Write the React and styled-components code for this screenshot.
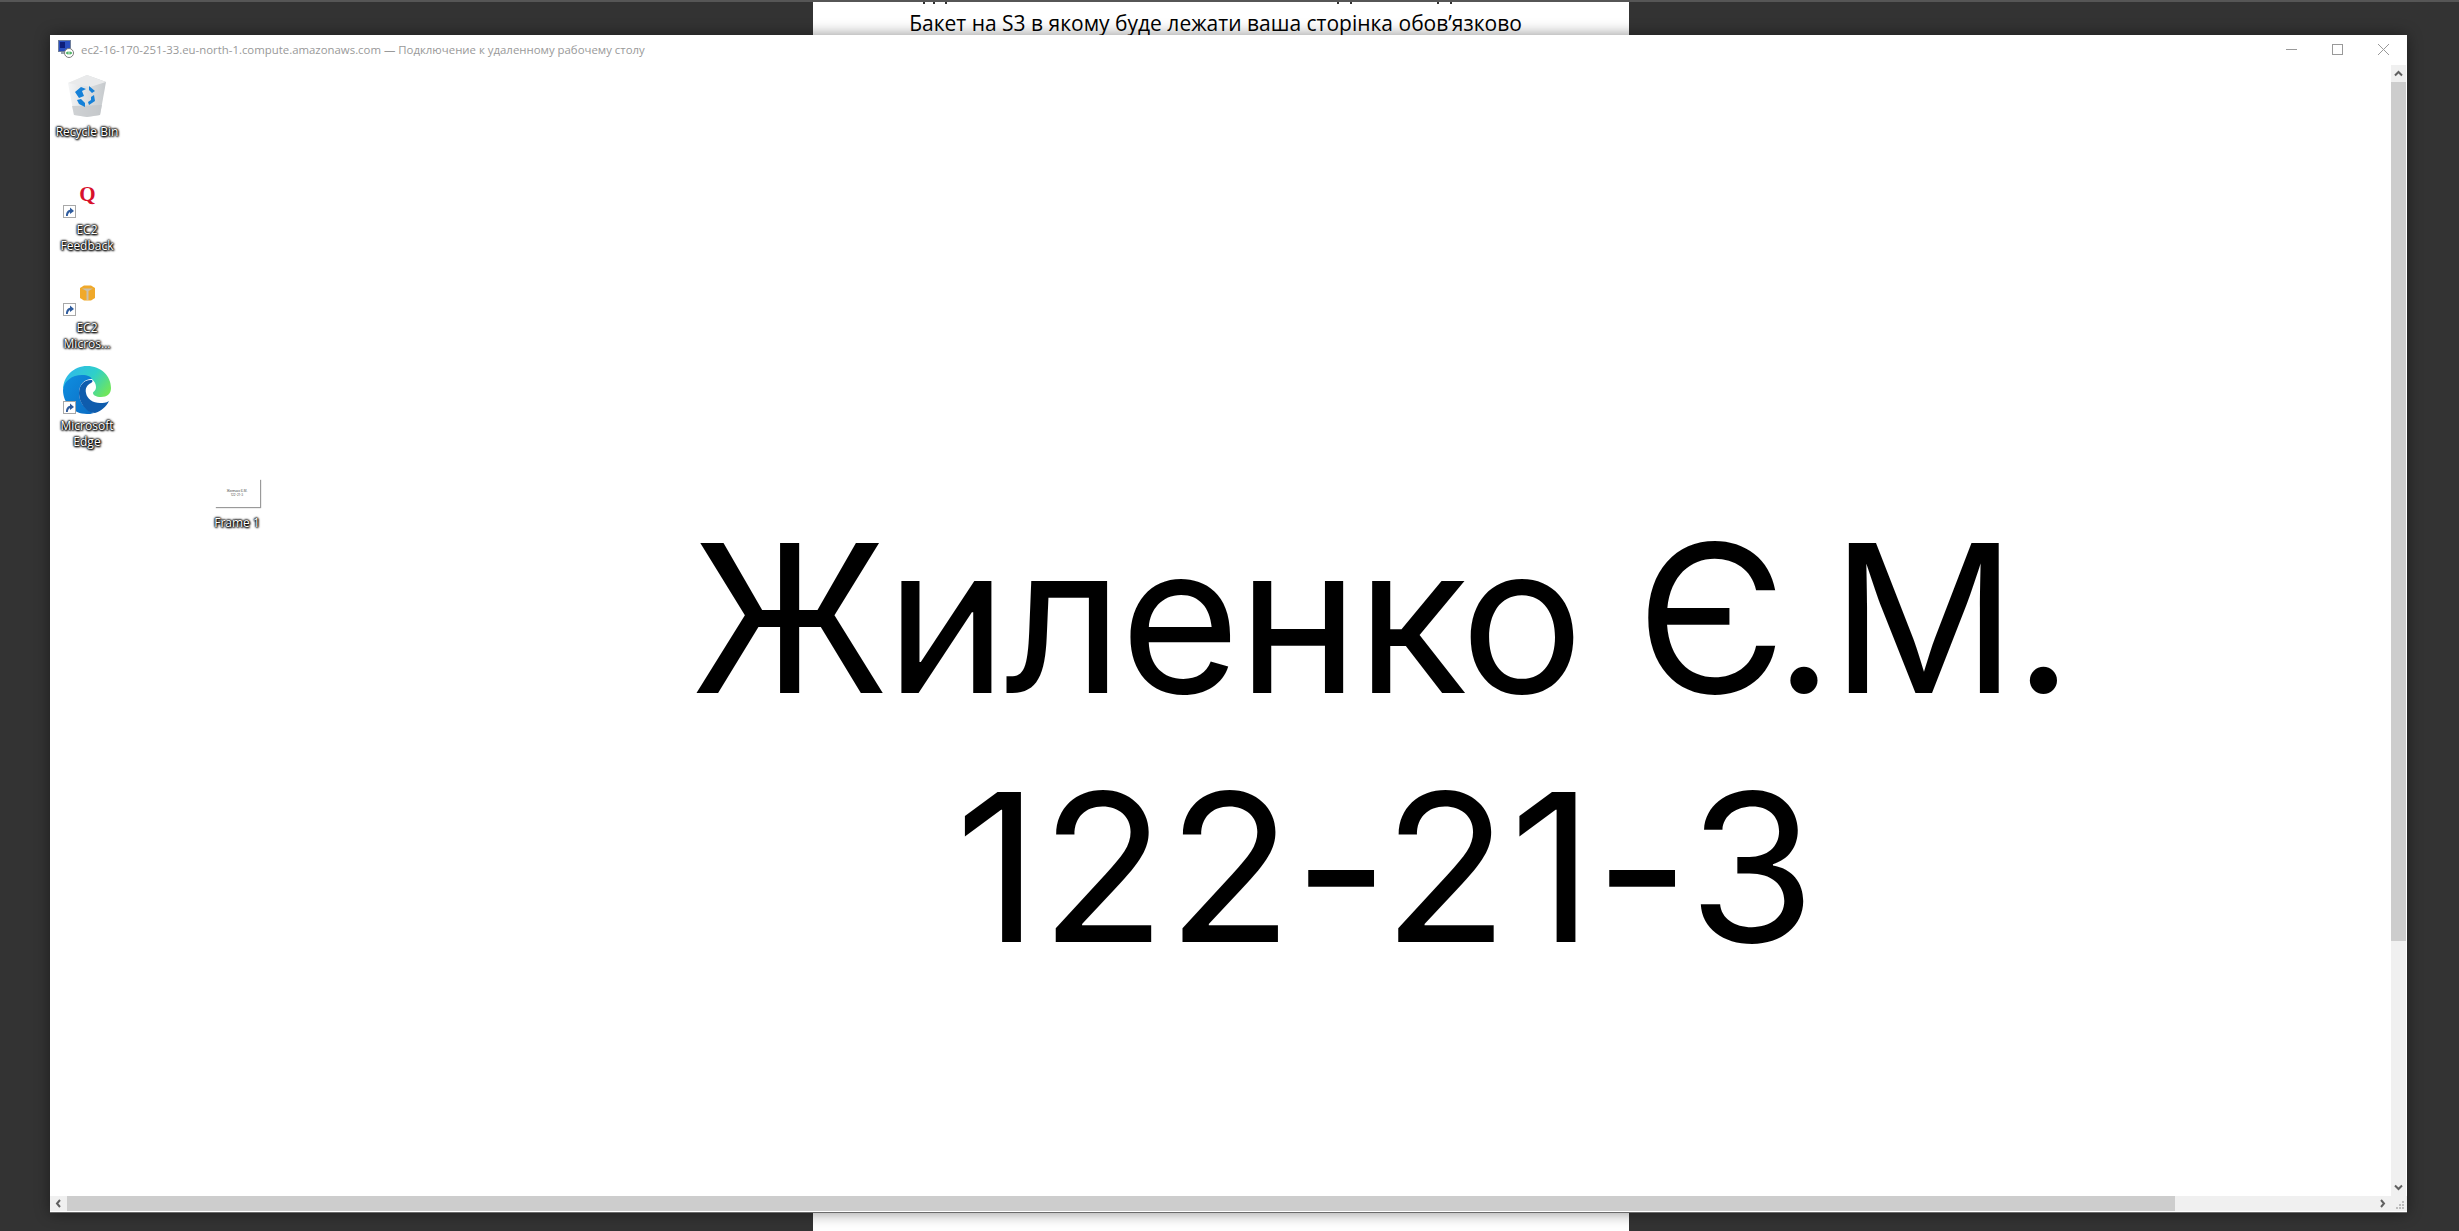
import React from 'react';
import styled, { createGlobalStyle } from 'styled-components';

const GlobalStyle = createGlobalStyle`
  html, body {
    margin: 0;
    padding: 0;
    background: #333333;
  }
  body {
    font-family: "Open Sans", "Noto Sans", sans-serif;
    overflow: hidden;
  }
`;

const Page = styled.div`
  position: relative;
  width: 2459px;
  height: 1231px;
  overflow: hidden;
  background: #333333;
  border-top: 2px solid #565656;
  box-sizing: border-box;
`;

const DocSheet = styled.div`
  width: 816px;
  height: 100%;
  margin-left: 813px;
  background: #ffffff;
  display: flex;
  flex-direction: column;
  align-items: center;
`;

const TailRow = styled.div`
  display: flex;
  align-self: flex-start;
  height: 2px;
  padding-left: 110px;
`;

const Tail = styled.span`
  width: 2px;
  height: 2px;
  margin-left: ${(p) => p.$gap}px;
  background: #333333;
`;

const DocLine = styled.p`
  margin: 4px 11px 0 0;
  font-family: "Open Sans", sans-serif;
  font-size: 21px;
  line-height: 30px;
  color: #000000;
  white-space: nowrap;
`;

const RemoteWindow = styled.div`
  position: absolute;
  left: 50px;
  top: 33px;
  width: 2357px;
  height: 1177px;
  display: flex;
  flex-direction: column;
  background: #ffffff;
  border-bottom: 1px solid #6a6a6a;
  box-shadow: 0 0 14px rgba(0, 0, 0, 0.45);
`;

const TitleBar = styled.div`
  height: 30px;
  flex: none;
  box-sizing: border-box;
  padding: 0 0 2px 8px;
  display: flex;
  align-items: center;
  color: #999999;
`;

const TitleText = styled.span`
  margin-left: 7px;
  font-family: "Open Sans", sans-serif;
  font-size: 11.4px;
  white-space: nowrap;
`;

const WindowControls = styled.div`
  margin-left: auto;
  display: flex;
  align-items: center;
  gap: 35px;
  padding-right: 18px;
`;

const ControlIcon = styled.svg`
  display: block;
  width: 11px;
  height: 11px;
  fill: none;
  stroke: #999999;
  stroke-width: 1;
`;

const WindowBody = styled.div`
  flex: 1;
  min-height: 0;
  display: flex;
`;

const Desktop = styled.div`
  position: relative;
  flex: 1;
  box-sizing: border-box;
  padding: 429px 0 0 320px;
  background: #ffffff;
`;

const BigName = styled.div`
  margin-left: ${(p) => p.$shift || 0}px;
  font-family: Inter, sans-serif;
  font-size: 206px;
  line-height: 249px;
  letter-spacing: ${(p) => p.$track}px;
  color: #000000;
  text-align: center;
  white-space: nowrap;
`;

const VerticalBar = styled.div`
  width: 15px;
  flex: none;
  margin-right: 1px;
  display: flex;
  flex-direction: column;
  background: #f0f0f0;
`;

const HorizontalBarRow = styled.div`
  height: 15px;
  flex: none;
  margin-bottom: 1px;
  display: flex;
  background: #f0f0f0;
`;

const BarButton = styled.div`
  flex: none;
  width: ${(p) => (p.$wide ? '17px' : '15px')};
  height: ${(p) => (p.$wide ? '15px' : '17px')};
  display: flex;
  align-items: center;
  justify-content: center;
`;

const VerticalThumb = styled.div`
  height: 859px;
  flex: none;
  background: #cdcdcd;
`;

const HorizontalThumb = styled.div`
  width: 2108px;
  flex: none;
  background: #cdcdcd;
`;

const BarSpacer = styled.div`
  flex: 1;
`;

const Arrow = styled.svg`
  display: block;
  width: 9px;
  height: 9px;
  fill: none;
  stroke: #606060;
  stroke-width: 2;
`;

const GripBox = styled.div`
  flex: none;
  width: 16px;
  height: 15px;
  display: flex;
  align-items: flex-end;
  justify-content: flex-end;
`;

const Grip = styled.svg`
  display: block;
  width: 9px;
  height: 9px;
  margin: 0 2px 1px 0;
  fill: #bdbdbd;
`;

const DesktopIcon = styled.div`
  position: absolute;
  left: ${(p) => p.$x}px;
  top: ${(p) => p.$y}px;
  width: 76px;
  display: flex;
  flex-direction: column;
  align-items: center;
`;

const IconArt = styled.div`
  position: relative;
  width: 48px;
  height: ${(p) => p.$h}px;
  box-sizing: border-box;
  padding-top: ${(p) => p.$pad || 0}px;
  display: flex;
  justify-content: center;
`;

const IconLabel = styled.div`
  margin-top: 4px;
  font-family: "Open Sans", sans-serif;
  font-size: 12px;
  line-height: 15.5px;
  color: #ffffff;
  text-align: center;
  white-space: pre-line;
  text-shadow: 0 0 2px #000, 0 0 2px #000, 0 0 2px #000, 0 0 3px #000, 1px 1px 2px #000;
`;

const ShortcutBadge = styled.svg`
  position: absolute;
  left: 0;
  bottom: 0;
  width: 13px;
  height: 13px;
`;

const QuestionLogo = styled.span`
  margin: 0 0 0 1px;
  font-family: "Liberation Serif", serif;
  font-weight: 700;
  font-size: 21px;
  line-height: 22px;
  color: #d8112c;
`;

const FrameThumb = styled.div`
  width: 45px;
  height: 28px;
  margin-bottom: 4px;
  display: flex;
  flex-direction: column;
  align-items: center;
  justify-content: center;
  background: #ffffff;
  box-shadow: 1px 1px 1px #9a9a9a;
  font-family: Inter, sans-serif;
  font-size: 3px;
  line-height: 4px;
  color: #444444;
`;

const Shortcut = () => (
  <ShortcutBadge viewBox="0 0 13 13">
    <rect x="0.5" y="0.5" width="12" height="12" fill="#fff" stroke="#a8a8a8" />
    <path d="M3 11 C3 7 5 5.2 7 4.8 L7 2.5 L11 6 L7 9 L7 7.2 C5.8 7.4 5 8.8 4.8 11 Z" fill="#2f5c9e" />
  </ShortcutBadge>
);

const RecycleBin = () => (
  <svg width="40" height="44" viewBox="0 0 40 44">
    <defs>
      <linearGradient id="binSide" x1="0" x2="1" y1="0" y2="0">
        <stop offset="0" stopColor="#f4f5f6" />
        <stop offset="1" stopColor="#c5c9cc" />
      </linearGradient>
    </defs>
    <path d="M1 9 L20 1 L39 8 L33 41 L20 43 L7 41 Z" fill="url(#binSide)" />
    <path d="M1 9 L20 1 L39 8 L23 13 Z" fill="#e9eaeb" />
    <path d="M5 32 L35 31 L33 41 L20 43 L7 41 Z" fill="#c2c5c7" opacity="0.7" />
    <path d="M8 18 L14 13 L19 15 L15 17 L17 22 L12 24 Z M22 12 L28 17 L25 19 L22 16 Z M27 21 L28 27 L22 31 L21 28 L24 26 L24 23 Z M10 26 L14 25 L18 29 L18 33 L12 30 Z" fill="#1681d8" />
  </svg>
);

const GoldBox = () => (
  <svg width="15" height="16" viewBox="0 0 15 16">
    <path d="M0 3 L4 0.5 H11 L15 3 V13 L11 15.5 H4 L0 13 Z" fill="#f0a92a" />
    <path d="M2 3.5 H13 L8.5 6 V15 H6.5 V6 Z" fill="#c9c0ae" />
  </svg>
);

const EdgeLogo = () => (
  <svg width="48" height="48" viewBox="0 0 48 48">
    <defs>
      <linearGradient id="edgeTop" x1="0" x2="1" y1="0.2" y2="0.7">
        <stop offset="0" stopColor="#2fb6ee" />
        <stop offset="0.55" stopColor="#2fd0c8" />
        <stop offset="1" stopColor="#6fe65c" />
      </linearGradient>
      <linearGradient id="edgeLeft" x1="0" x2="1" y1="0" y2="1">
        <stop offset="0" stopColor="#0f8fe0" />
        <stop offset="1" stopColor="#0b6cc4" />
      </linearGradient>
    </defs>
    <path d="M0 24 C0 10 11 0 24 0 C38 0 48 10 48 22 C48 28 44 31 38 31 C33 31 30 29 30 27 C30 25.5 33 25 33 21 C33 15 27 10 20 10 C10 10 3 15 0 24 Z" fill="url(#edgeTop)" />
    <path d="M0 24 C1 15 9 9 19 9 C25 9 28 11 29 13 C21 13 16 19 16 27 C16 36 22 44 31 47 C28 48 26 48 24 48 C10 48 0 37 0 24 Z" fill="url(#edgeLeft)" />
    <path d="M28 14 C20 14 16 20 16 27 C16 36 23 47 32 47 C38 45 43 41 46 35 C43 37 40 37 37 37 C30 37 24 33 23 27 C22 22 24 19 28 17 C30 16 30 14 28 14 Z" fill="#0f5cad" />
  </svg>
);

const RdpIcon = () => (
  <svg width="16" height="18" viewBox="0 0 16 18">
    <rect x="0.5" y="0.5" width="12" height="11" fill="#2a4fc0" stroke="#6f7f9c" />
    <rect x="2" y="2" width="5" height="6" fill="#0e1e7a" />
    <rect x="3" y="12" width="7" height="2" fill="#9aa3b0" />
    <circle cx="11" cy="13" r="4.5" fill="#ffffff" stroke="#7a7a7a" />
    <path d="M8.5 13 H13.5 M10 11.5 L8.5 13 L10 14.5 M12 11.5 L13.5 13 L12 14.5" stroke="#1e9e3a" fill="none" />
  </svg>
);

const App = () => (
  <>
    <GlobalStyle />
    <Page>
      <DocSheet>
        <TailRow>
          <Tail $gap={0} />
          <Tail $gap={8} />
          <Tail $gap={10} />
          <Tail $gap={390} />
          <Tail $gap={11} />
          <Tail $gap={85} />
          <Tail $gap={11} />
        </TailRow>
        <DocLine>Бакет на S3 в якому буде лежати ваша сторінка обов’язково</DocLine>
      </DocSheet>

      <RemoteWindow>
        <TitleBar>
          <RdpIcon />
          <TitleText>ec2-16-170-251-33.eu-north-1.compute.amazonaws.com — Подключение к удаленному рабочему столу</TitleText>
          <WindowControls>
            <ControlIcon viewBox="0 0 11 11"><path d="M0 5.5 H11" /></ControlIcon>
            <ControlIcon viewBox="0 0 11 11"><rect x="0.5" y="0.5" width="10" height="10" /></ControlIcon>
            <ControlIcon viewBox="0 0 11 11"><path d="M0 0 L11 11 M11 0 L0 11" /></ControlIcon>
          </WindowControls>
        </TitleBar>
        <WindowBody>
          <Desktop>
            <DesktopIcon $x={-1} $y={9}>
              <IconArt $h={46}><RecycleBin /></IconArt>
              <IconLabel>Recycle Bin</IconLabel>
            </DesktopIcon>
            <DesktopIcon $x={-1} $y={118}>
              <IconArt $h={35}>
                <QuestionLogo>Q</QuestionLogo>
                <Shortcut />
              </IconArt>
              <IconLabel>{'EC2\nFeedback'}</IconLabel>
            </DesktopIcon>
            <DesktopIcon $x={-1} $y={216}>
              <IconArt $h={35} $pad={4}>
                <GoldBox />
                <Shortcut />
              </IconArt>
              <IconLabel>{'EC2\nMicros...'}</IconLabel>
            </DesktopIcon>
            <DesktopIcon $x={-1} $y={301}>
              <IconArt $h={48}>
                <EdgeLogo />
                <Shortcut />
              </IconArt>
              <IconLabel>{'Microsoft\nEdge'}</IconLabel>
            </DesktopIcon>
            <DesktopIcon $x={149} $y={414}>
              <FrameThumb>
                <span>Жиленко Є.М.</span>
                <span>122-21-3</span>
              </FrameThumb>
              <IconLabel>Frame 1</IconLabel>
            </DesktopIcon>
            <BigName $track={-2.9}>Жиленко Є.М.</BigName>
            <BigName $track={1.2} $shift={11}>122-21-3</BigName>
          </Desktop>
          <VerticalBar>
            <BarButton>
              <Arrow viewBox="0 0 9 9"><path d="M1 6.5 L4.5 3 L8 6.5" /></Arrow>
            </BarButton>
            <VerticalThumb />
            <BarSpacer />
            <BarButton>
              <Arrow viewBox="0 0 9 9"><path d="M1 2.5 L4.5 6 L8 2.5" /></Arrow>
            </BarButton>
          </VerticalBar>
        </WindowBody>
        <HorizontalBarRow>
          <BarButton $wide>
            <Arrow viewBox="0 0 9 9"><path d="M6 1 L3 4.5 L6 8" /></Arrow>
          </BarButton>
          <HorizontalThumb />
          <BarSpacer />
          <BarButton $wide>
            <Arrow viewBox="0 0 9 9"><path d="M3 1 L6 4.5 L3 8" /></Arrow>
          </BarButton>
          <GripBox>
            <Grip viewBox="0 0 9 9">
              <rect x="6" y="0" width="2" height="2" />
              <rect x="3" y="3" width="2" height="2" />
              <rect x="6" y="3" width="2" height="2" />
              <rect x="0" y="6" width="2" height="2" />
              <rect x="3" y="6" width="2" height="2" />
              <rect x="6" y="6" width="2" height="2" />
            </Grip>
          </GripBox>
        </HorizontalBarRow>
      </RemoteWindow>
    </Page>
  </>
);

export default App;
